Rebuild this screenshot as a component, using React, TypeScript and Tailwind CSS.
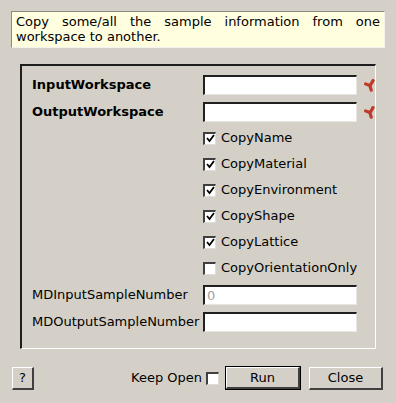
import React, { useState } from 'react';

const FONT = { fontFamily: '"DejaVu Sans", "Liberation Sans", sans-serif' };

// Red "invalid" star shown next to mandatory properties
function Invalid() {
  return (
    <svg width="11" height="13" viewBox="0 0 11 13" className="shrink-0">
      <path d="M1.6 5 L6 6.4" stroke="#bf3a2a" strokeWidth="3.2" strokeLinecap="round" fill="none" />
      <path d="M9 1.6 L6 6.8 L7.2 11.2" stroke="#bf3a2a" strokeWidth="3.2" strokeLinecap="round" strokeLinejoin="round" fill="none" />
    </svg>
  );
}

function Check({ checked, onClick }: { checked: boolean; onClick?: () => void }) {
  return (
    <div
      onClick={onClick}
      className="w-[13px] h-[13px] bg-white border-t-2 border-l-2 border-t-[#404040] border-l-[#404040] border-r border-b border-r-[#e0ddd6] border-b-[#e0ddd6] flex items-center justify-center shrink-0 cursor-pointer"
    >
      {checked && (
        <svg width="9" height="9" viewBox="0 0 9 9">
          <path d="M1 4 L3.5 7 L8 1" stroke="#000" strokeWidth="1.8" fill="none" />
        </svg>
      )}
    </div>
  );
}

function Field({ value, disabled }: { value?: string; disabled?: boolean }) {
  return (
    <div className="w-[154px] h-[20px] bg-white border-t-2 border-l-2 border-t-[#202020] border-l-[#202020] border-r border-b border-r-[#e8e6e0] border-b-[#e8e6e0] flex items-center px-[2px]">
      <span className={disabled ? 'text-[#a0a0a0]' : 'text-black'}>{value}</span>
    </div>
  );
}

function Button({ label, isDefault, className }: { label: string; isDefault?: boolean; className?: string }) {
  const inner = (
    <div className="h-full w-full border-t border-l border-t-white border-l-white border-r-2 border-b-2 border-r-[#404040] border-b-[#404040] flex items-center justify-center bg-[#d4d0c8]">
      {label}
    </div>
  );
  return isDefault ? (
    <div className={`border border-black ${className}`}>{inner}</div>
  ) : (
    <div className={className}>{inner}</div>
  );
}

const CHECKS = [
  { name: 'CopyName', on: true },
  { name: 'CopyMaterial', on: true },
  { name: 'CopyEnvironment', on: true },
  { name: 'CopyShape', on: true },
  { name: 'CopyLattice', on: true },
  { name: 'CopyOrientationOnly', on: false },
];

export default function App() {
  const [checks, setChecks] = useState(CHECKS.map(c => c.on));
  const [keepOpen, setKeepOpen] = useState(false);

  return (
    <div style={FONT} className="w-[396px] h-[403px] bg-[#d4d0c8] text-[13px] text-black flex flex-col overflow-hidden">
      {/* Description */}
      <div className="ml-[11px] mt-[11px] w-[374px] h-[37px] bg-[#ffffe0] border-t border-l border-t-[#8c8a85] border-l-[#8c8a85] border-r border-b border-r-[#f4f2ee] border-b-[#f4f2ee] pl-[4px] pr-[4px] pt-[2px] leading-[15px]">
        <p className="text-justify [text-align-last:left]">
          Copy some/all the sample information from one workspace to another.
        </p>
      </div>

      {/* Properties group */}
      <div className="ml-[20px] mt-[16px] w-[356px] h-[285px] border-t-2 border-l-2 border-t-[#1e1e1e] border-l-[#1e1e1e] border-r border-b border-r-white border-b-white pl-[10px] pt-[9px]">
        <div className="grid grid-cols-[171px_154px_auto] gap-x-0 items-center">
          <span className="font-bold h-[20px] leading-[20px]">InputWorkspace</span>
          <Field />
          <div className="pl-[7px] flex items-center"><Invalid /></div>

          <span className="font-bold h-[20px] leading-[20px] mt-[7px]">OutputWorkspace</span>
          <div className="mt-[7px]"><Field /></div>
          <div className="pl-[7px] mt-[7px] flex items-center"><Invalid /></div>
        </div>

        <div className="pl-[171px] mt-[3px] flex flex-col">
          {CHECKS.map((c, i) => (
            <div key={c.name} className="h-[26px] flex items-center gap-[5px]">
              <Check checked={checks[i]} onClick={() => setChecks(checks.map((v, j) => (j === i ? !v : v)))} />
              <span>{c.name}</span>
            </div>
          ))}
        </div>

        <div className="grid grid-cols-[171px_154px] items-center mt-[4px]">
          <span className="h-[20px] leading-[20px]">MDInputSampleNumber</span>
          <Field value="0" disabled />
          <span className="h-[20px] leading-[20px] mt-[7px]">MDOutputSampleNumber</span>
          <div className="mt-[7px]"><Field /></div>
        </div>
      </div>

      {/* Buttons */}
      <div className="mt-[17px] ml-[12px] flex items-center h-[24px]">
        <Button label="?" className="w-[22px] h-[23px]" />
        <span className="ml-auto">Keep Open</span>
        <div className="ml-[4px]">
          <Check checked={keepOpen} onClick={() => setKeepOpen(!keepOpen)} />
        </div>
        <Button label="Run" isDefault className="ml-[6px] w-[76px] h-[24px]" />
        <Button label="Close" className="ml-[8px] mr-[13px] w-[74px] h-[23px]" />
      </div>
    </div>
  );
}
